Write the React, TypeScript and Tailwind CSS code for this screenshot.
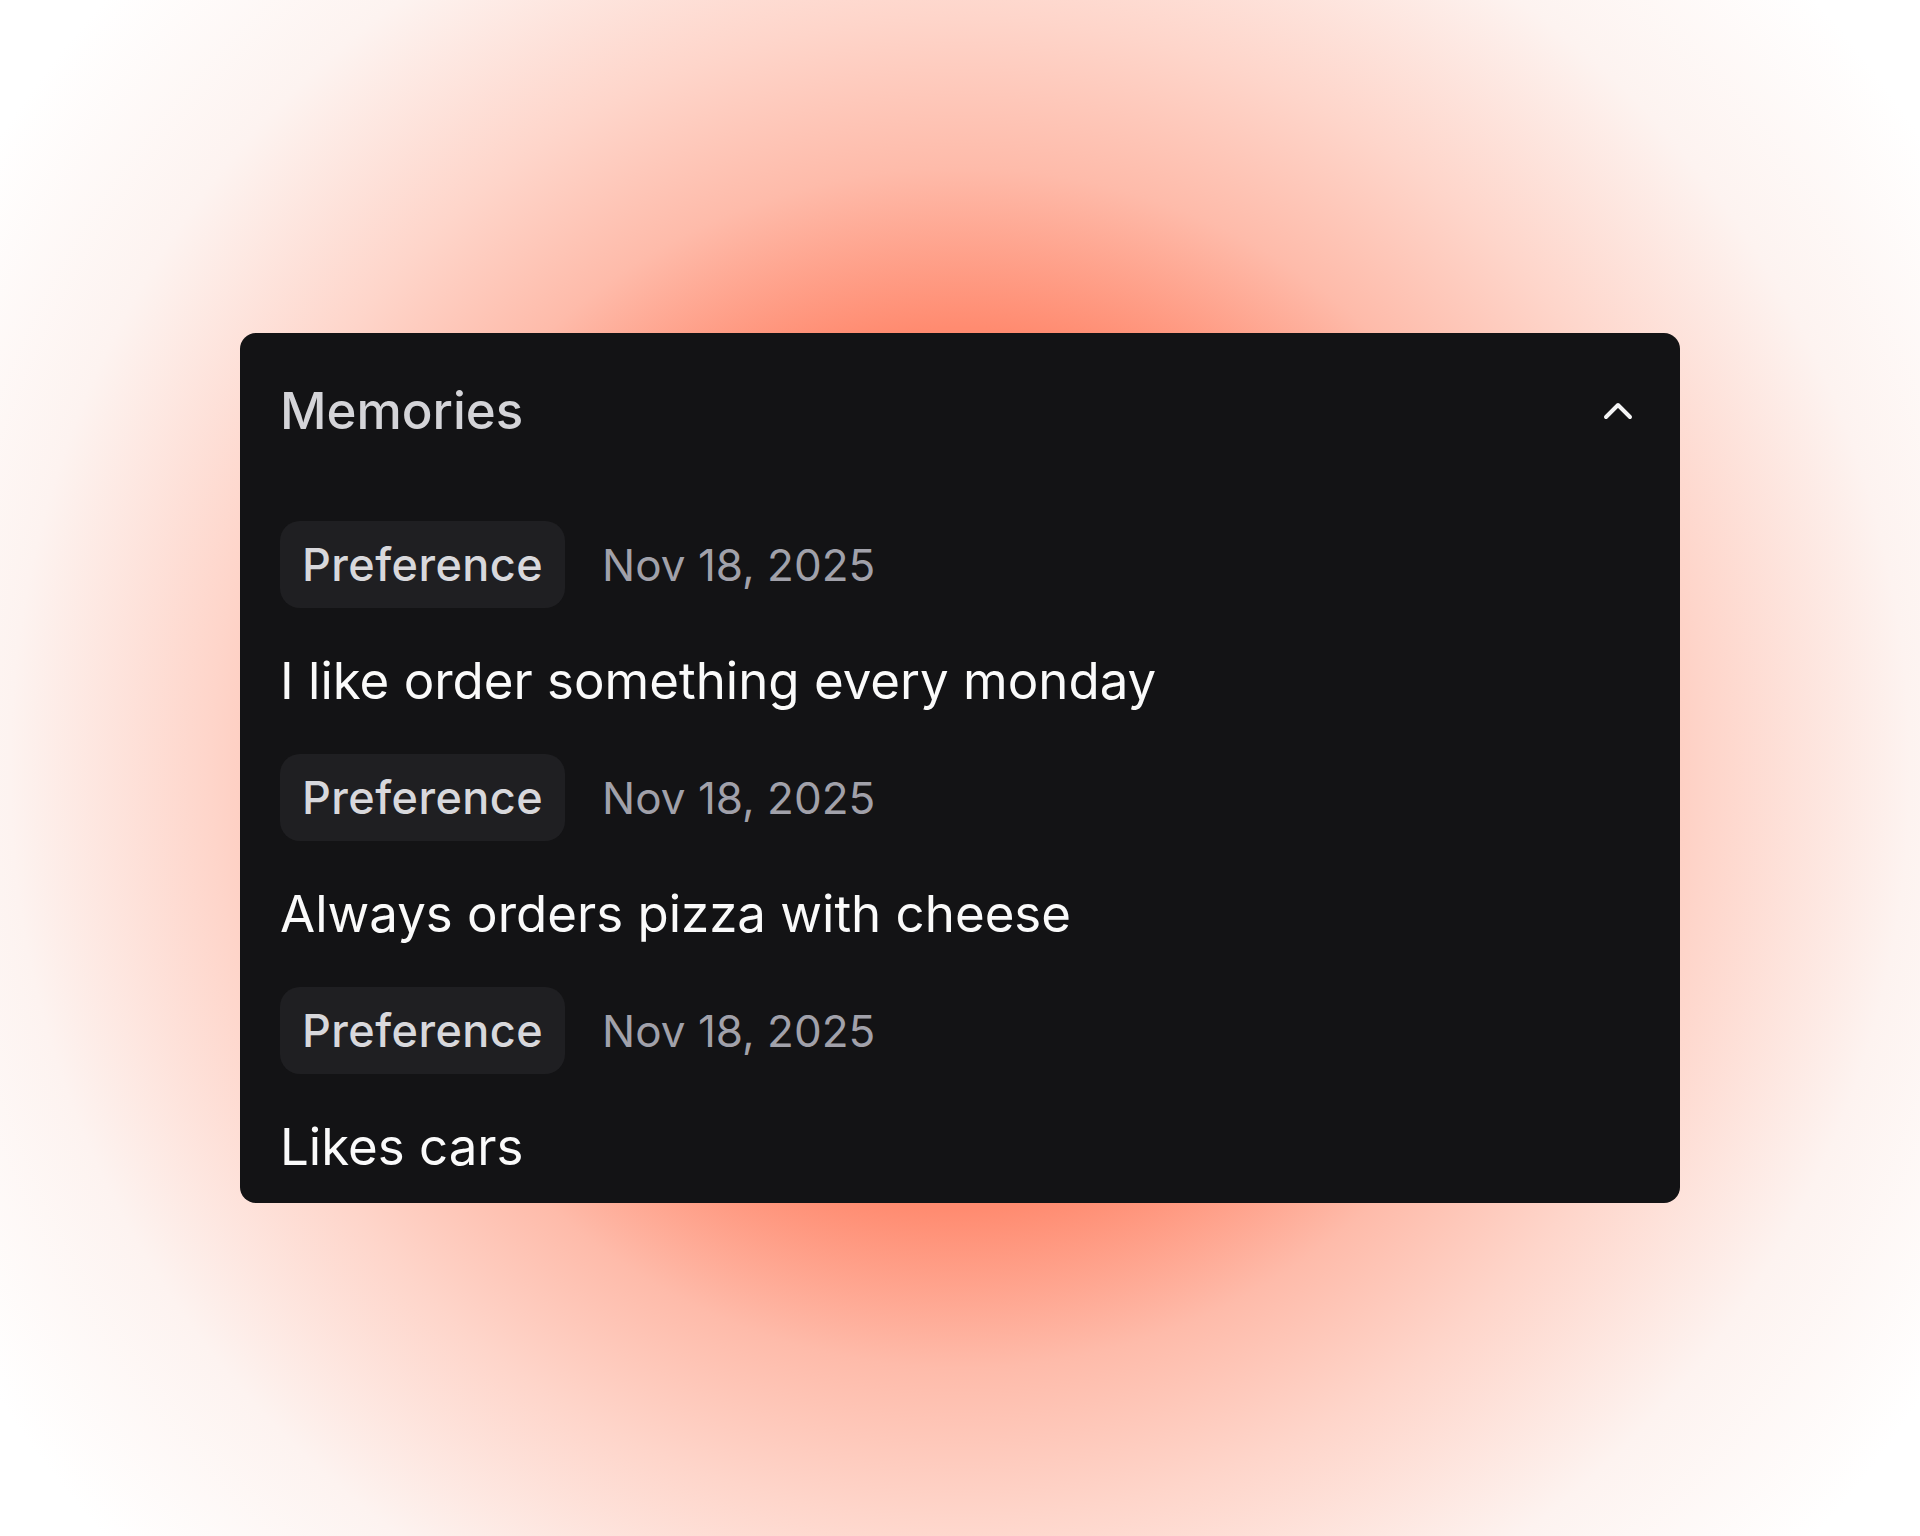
import { ChevronUp } from 'lucide-react'

interface Memory {
  id: number
  kind: string
  date: string
  text: string
}

const memories: Memory[] = [
  { id: 1, kind: 'Preference', date: 'Nov 18, 2025', text: 'I like order something every monday' },
  { id: 2, kind: 'Preference', date: 'Nov 18, 2025', text: 'Always orders pizza with cheese' },
  { id: 3, kind: 'Preference', date: 'Nov 18, 2025', text: 'Likes cars' },
]

function MemoryItem({ memory }: { memory: Memory }) {
  return (
    <>
      <div className="flex items-center gap-[37px]">
        <span className="flex h-[87px] items-center rounded-[20px] bg-[#1f1f22] px-[22px] text-[45px] font-medium tracking-[0.01em] text-[#d8d8dc]">
          {memory.kind}
        </span>
        <span className="text-[44px] text-[#a1a1aa]">{memory.date}</span>
      </div>
      <p className="text-[51px] leading-[72px] text-[#fafafa]">{memory.text}</p>
    </>
  )
}

export default function App() {
  return (
    <div
      className="flex h-[1536px] w-full items-center justify-center bg-[radial-gradient(circle_at_50%_50%,#ff7a5c_0px,#ff8b70_440px,#febbaa_600px,#fed5ca_750px,#fdf3f0_950px,#ffffff_1150px)]"
      style={{ fontFamily: 'Inter, "Noto Sans", sans-serif' }}
    >
      <div className="h-[870px] w-[1440px] overflow-hidden rounded-2xl bg-[#131315] pl-10 pr-[38px] pt-[54px]">
        <div className="flex h-12 items-center justify-between">
          <h2 className="text-[51px] font-medium text-[#d4d4d8]">Memories</h2>
          <button className="text-[#f4f4f5]">
            <ChevronUp size={48} strokeWidth={2} />
          </button>
        </div>

        <div className="mt-[86px] flex flex-col gap-[37px]">
          {memories.map((m) => (
            <MemoryItem key={m.id} memory={m} />
          ))}
        </div>
      </div>
    </div>
  )
}
